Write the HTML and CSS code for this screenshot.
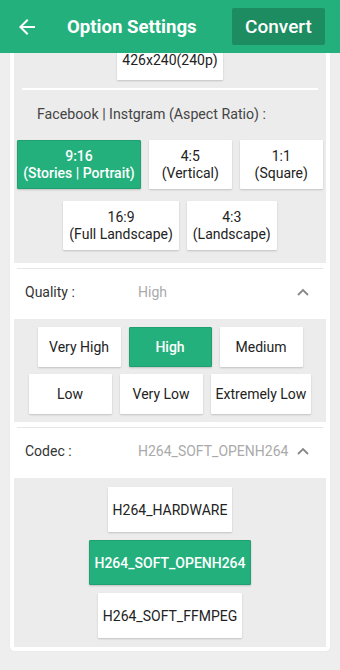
FILE: index.html
```html
<!DOCTYPE html>
<html lang="en">
<head>
  <meta charset="UTF-8">
  <meta name="viewport" content="width=device-width, initial-scale=1.0">
  <title>Option Settings</title>
  <link rel="stylesheet" href="styles.css">
</head>
<body>
  <header class="appbar">
    <button class="back-btn" aria-label="Back">
      <svg viewBox="0 0 24 24" width="24" height="24"><path d="M20 11H7.83l5.59-5.59L12 4l-8 8 8 8 1.41-1.41L7.83 13H20v-2z" fill="#fff"/></svg>
    </button>
    <h1 class="appbar-title">Option Settings</h1>
    <button class="convert-btn">Convert</button>
  </header>

  <main class="scroll">
    <div class="card">
      <!-- Resolution / aspect ratio -->
      <section class="panel panel-resolution">
        <div class="opt-list">
          <button class="opt">426x240(240p)</button>
        </div>
        <div class="panel-rule"></div>
        <p class="panel-label">Facebook | Instgram (Aspect Ratio) :</p>
        <div class="opt-list opt-list-ratio">
          <button class="opt opt-two selected">9:16<br>(Stories | Portrait)</button>
          <button class="opt opt-two">4:5<br>(Vertical)</button>
          <button class="opt opt-two">1:1<br>(Square)</button>
          <button class="opt opt-two">16:9<br>(Full Landscape)</button>
          <button class="opt opt-two">4:3<br>(Landscape)</button>
        </div>
      </section>

      <div class="divider"></div>

      <!-- Quality -->
      <div class="setting-row">
        <span class="setting-name">Quality :</span>
        <span class="setting-value">High</span>
        <svg class="chevron" viewBox="0 0 12 8" width="12" height="8"><path d="M1 7l5-5 5 5" fill="none" stroke="#888" stroke-width="1.8"/></svg>
      </div>
      <section class="panel panel-quality">
        <div class="opt-list">
          <button class="opt">Very High</button>
          <button class="opt selected">High</button>
          <button class="opt">Medium</button>
          <button class="opt">Low</button>
          <button class="opt">Very Low</button>
          <button class="opt">Extremely Low</button>
        </div>
      </section>

      <div class="divider"></div>

      <!-- Codec -->
      <div class="setting-row">
        <span class="setting-name">Codec :</span>
        <span class="setting-value">H264_SOFT_OPENH264</span>
        <svg class="chevron" viewBox="0 0 12 8" width="12" height="8"><path d="M1 7l5-5 5 5" fill="none" stroke="#888" stroke-width="1.8"/></svg>
      </div>
      <section class="panel panel-codec">
        <div class="opt-column">
          <button class="opt opt-codec">H264_HARDWARE</button>
          <button class="opt opt-codec selected">H264_SOFT_OPENH264</button>
          <button class="opt opt-codec">H264_SOFT_FFMPEG</button>
        </div>
      </section>
    </div>
  </main>
</body>
</html>
```

FILE: styles.css
```css
* {
  box-sizing: border-box;
}

html, body {
  margin: 0;
  padding: 0;
}

body {
  font-family: Roboto, "Noto Sans", "Liberation Sans", sans-serif;
  background-color: #eeeeee;
  color: #222;
  width: 340px;
  height: 670px;
  overflow: hidden;
}

button {
  font-family: inherit;
  cursor: pointer;
}

/* App bar */
.appbar {
  position: relative;
  z-index: 2;
  height: 53px;
  background-color: #23b07d;
  display: flex;
  align-items: center;
  padding: 0 15px 0 15px;
}

.back-btn {
  border: none;
  background: none;
  padding: 0;
  width: 24px;
  height: 24px;
  display: flex;
}

.appbar-title {
  margin: 0 0 0 28px;
  font-size: 18.6px;
  font-weight: 700;
  color: #fff;
  flex: 1;
}

.convert-btn {
  height: 37px;
  width: 93px;
  border: none;
  border-radius: 2px;
  background-color: #1d8c61;
  color: #fff;
  font-size: 19px;
  font-weight: 500;
  padding: 0;
}

/* Scroll area */
.scroll {
  height: 617px;
  overflow: hidden;
}

.card {
  margin: -21px 10px 0;
  padding: 0 4px 4px;
  background-color: #fff;
  border-radius: 0 0 4px 4px;
  box-shadow: 0 0 1px rgba(0, 0, 0, 0.15);
}

.panel {
  background-color: #ececec;
}

.panel-resolution {
  padding: 8px 0 13px;
}

.panel-quality {
  padding: 8px 0;
}

.panel-codec {
  padding: 9px 0;
}

.panel-rule {
  height: 2px;
  background-color: #fff;
  margin: 8px 8px 0;
}

.panel-label {
  margin: 14px 0 0 23px;
  font-size: 14.2px;
  line-height: 20px;
  color: #444;
}

/* Option buttons */
.opt-list {
  display: flex;
  flex-wrap: wrap;
  justify-content: center;
  gap: 7px 8px;
}

.opt-list-ratio {
  margin-top: 16px;
  gap: 12px 8px;
}

.opt-column {
  display: flex;
  flex-direction: column;
  align-items: center;
  gap: 8px;
}

.opt {
  min-width: 83px;
  height: 40px;
  padding: 0 4px;
  border: 1px solid transparent;
  border-radius: 1px;
  background-color: #fff;
  color: #222;
  font-size: 14px;
  box-shadow: 0 1px 2px rgba(0, 0, 0, 0.18);
}

.opt-two {
  height: 49px;
  line-height: 16.5px;
  padding: 0 5px;
}

.opt-codec {
  height: 45px;
}

.opt.selected {
  background-color: #23b07d;
  border-color: #1fa070;
  color: #fff;
  font-weight: 500;
}

/* Setting rows */
.divider {
  height: 1px;
  margin: 5px 3px 0;
  background-color: #e6e6e6;
}

.setting-row {
  height: 50px;
  display: flex;
  align-items: center;
  padding: 0 14px 4px 11px;
  font-size: 14px;
}

.setting-name {
  width: 113px;
  color: #333;
}

.setting-value {
  flex: 1;
  color: #aaa;
}

.chevron {
  margin-right: 3px;
}
```
